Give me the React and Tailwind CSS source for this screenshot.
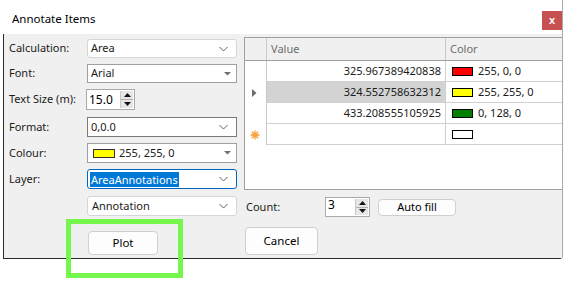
import React from "react";

const Chevron = () => (
  <svg width="9" height="5" viewBox="0 0 9 5" className="absolute right-[8px] top-1/2 -translate-y-1/2">
    <path d="M0.5 0.5 L4.5 4.5 L8.5 0.5" fill="none" stroke="#606060" strokeWidth="1" />
  </svg>
);

const Tri = () => (
  <svg width="7" height="4" viewBox="0 0 7 4" className="absolute right-[5px] top-1/2 -translate-y-1/2">
    <path d="M0 0 L7 0 L3.5 3.5 Z" fill="#707070" />
  </svg>
);

const Spin = () => (
  <div className="flex flex-col w-[13px] h-full border-l border-[#c8c8c8]">
    <div className="flex-1 bg-[#e6e6e6] border-b border-[#b0b0b0] flex items-center justify-center">
      <svg width="7" height="4" viewBox="0 0 7 4"><path d="M0 4 L7 4 L3.5 0 Z" fill="#111" /></svg>
    </div>
    <div className="flex-1 bg-[#e6e6e6] flex items-center justify-center">
      <svg width="7" height="4" viewBox="0 0 7 4"><path d="M0 0 L7 0 L3.5 4 Z" fill="#111" /></svg>
    </div>
  </div>
);

const Swatch = ({ c }) => (
  <span className="inline-block w-[21px] h-[9px] border border-black" style={{ background: c }} />
);

export default function App() {
  const font = "font-['Noto_Sans',sans-serif]";
  const rows = [
    { v: "325.967389420838", c: "#ff0000", t: "255, 0, 0" },
    { v: "324.552758632312", c: "#ffff00", t: "255, 255, 0", sel: true },
    { v: "433.208555105925", c: "#008000", t: "0, 128, 0" },
  ];
  return (
    <div className={`relative w-[573px] h-[287px] bg-white text-[11px] text-[#1b1b1b] ${font}`}>
      <div className="ml-[3px] w-[560px] h-[259px] flex flex-col border-r border-[#a8a8a8] rounded-br-[3px] overflow-hidden">
        {/* title bar */}
        <div className="h-[34px] bg-white flex items-start justify-between pl-[9px]">
          <div className="mt-[11px] text-[11.5px] leading-[16px] text-black">Annotate Items</div>
          <div className="mt-[11px] w-[20px] h-[19px] bg-[#c75050] flex items-center justify-center text-white font-bold text-[11px] leading-none font-['Liberation_Sans',sans-serif]">x</div>
        </div>
        {/* content */}
        <div className="flex-1 bg-[#f0f0f0] border-l border-b border-[#2b2b2b] flex">
          {/* left column */}
          <div className="w-[240px] pl-[5px] flex flex-col">
            <div className="mt-[5px] h-[19px] flex items-center">
              <div className="w-[78px]">Calculation:</div>
              <div className="relative w-[150px] h-full bg-white border border-[#d6d6d6] rounded-[3px] flex items-center pl-[3px]">Area<Chevron /></div>
            </div>
            <div className="mt-[6px] h-[19px] flex items-center">
              <div className="w-[78px]">Font:</div>
              <div className="relative w-[150px] h-full bg-white border border-[#a0a0a0] flex items-center pl-[3px]">Arial<Tri /></div>
            </div>
            <div className="mt-[6px] h-[21px] flex items-center">
              <div className="w-[77px]">Text Size (m):</div>
              <div className="w-[49px] h-full bg-white border border-[#a9a9a9] flex items-center">
                <div className="flex-1 pl-[2px] text-[12px] text-black">15.0</div>
                <div className="h-full py-[1px] pr-[1px]"><Spin /></div>
              </div>
            </div>
            <div className="mt-[7px] h-[20px] flex items-center">
              <div className="w-[78px]">Format:</div>
              <div className="relative w-[150px] h-full bg-white border border-[#7a7a7a] flex items-center pl-[3px]">0,0.0<Chevron /></div>
            </div>
            <div className="mt-[6px] h-[20px] flex items-center">
              <div className="w-[78px]">Colour:</div>
              <div className="relative w-[150px] h-full bg-white border border-[#a0a0a0] flex items-center pl-[5px] gap-[4px]">
                <span className="inline-block w-[22px] h-[9px] bg-[#ffff00] border border-[#333]" />
                <span>255, 255, 0</span>
                <Tri />
              </div>
            </div>
            <div className="mt-[6px] h-[20px] flex items-center">
              <div className="w-[78px]">Layer:</div>
              <div className="relative w-[150px] h-full bg-white border border-[#0067c0] rounded-[3px] flex items-center pl-[2px]">
                <span className="bg-[#0078d7] text-white px-[1px] leading-[15px]">AreaAnnotations</span>
                <Chevron />
              </div>
            </div>
            <div className="mt-[7px] h-[20px] flex items-center">
              <div className="w-[78px]"></div>
              <div className="relative w-[150px] h-full bg-white border border-[#d6d6d6] rounded-[3px] flex items-center pl-[4px]">Annotation<Chevron /></div>
            </div>
            <div className="mt-[15px] ml-[79px] w-[70px] h-[24px] bg-[#fdfdfd] border border-[#d0d0d0] rounded-[4px] flex items-center justify-center text-[11.5px] text-black">Plot</div>
          </div>
          {/* right column */}
          <div className="flex-1 flex flex-col">
            <div className="mt-[3px] h-[153px] bg-white border-l border-t border-b border-[#a0a0a0] flex flex-col">
              <div className="h-[23px] bg-[#f0f0f0] border-b border-[#a0a0a0] flex text-[#6d6d6d]">
                <div className="w-[22px] border-r border-[#c8c8c8]" />
                <div className="w-[179px] border-r border-[#c8c8c8] pl-[4px] flex items-center">Value</div>
                <div className="flex-1 pl-[4px] flex items-center">Color</div>
              </div>
              {rows.map((r, i) => (
                <div key={i} className="h-[21px] flex">
                  <div className="w-[22px] border-r border-[#c8c8c8] flex items-center justify-center">
                    {r.sel && (
                      <svg width="5" height="8" viewBox="0 0 5 8" className="mr-[2px]"><path d="M0 0 L4.5 4 L0 8 Z" fill="#6d6d6d" /></svg>
                    )}
                  </div>
                  <div className={`w-[179px] border-r border-b border-[#d0d0d0] pr-[4px] flex items-center justify-end ${r.sel ? "bg-[#d3d3d3]" : ""}`}>{r.v}</div>
                  <div className="flex-1 border-b border-[#d0d0d0] pl-[6px] flex items-center gap-[5px]">
                    <Swatch c={r.c} />
                    <span>{r.t}</span>
                  </div>
                </div>
              ))}
              <div className="h-[21px] flex">
                <div className="w-[22px] border-r border-[#c8c8c8] flex items-center justify-center">
                  <svg width="10" height="10" viewBox="0 0 10 10" className="mr-[1px]">
                    <g stroke="#f59b30" strokeWidth="1.3">
                      <path d="M5 0.5 V9.5 M0.5 5 H9.5 M1.8 1.8 L8.2 8.2 M8.2 1.8 L1.8 8.2" />
                    </g>
                    <circle cx="5" cy="5" r="2.2" fill="#f7a640" />
                  </svg>
                </div>
                <div className="w-[179px] border-r border-b border-[#d0d0d0]" />
                <div className="flex-1 border-b border-[#d0d0d0] pl-[6px] flex items-center">
                  <Swatch c="#ffffff" />
                </div>
              </div>
            </div>
            <div className="mt-[7px] h-[20px] flex items-center pl-[2px]">
              <div className="w-[79px]">Count:</div>
              <div className="w-[45px] h-full bg-white border border-[#a9a9a9] flex">
                <div className="flex-1 pl-[2px] leading-[14px] text-[12px] text-black">3</div>
                <div className="h-full py-[1px] pr-[1px]"><Spin /></div>
              </div>
              <div className="ml-[8px] w-[78px] h-[17px] bg-[#fdfdfd] border border-[#d0d0d0] rounded-[4px] flex items-center justify-center text-black">Auto fill</div>
            </div>
            <div className="mt-[10px] ml-[1px] w-[73px] h-[28px] bg-[#fdfdfd] border border-[#d0d0d0] rounded-[4px] flex items-center justify-center text-[11.5px] text-black">Cancel</div>
          </div>
        </div>
      </div>
      {/* highlight overlay */}
      <div className="absolute left-[66px] top-[219px] w-[117px] h-[59px] border-[5px] border-[#74f64c]" />
    </div>
  );
}
